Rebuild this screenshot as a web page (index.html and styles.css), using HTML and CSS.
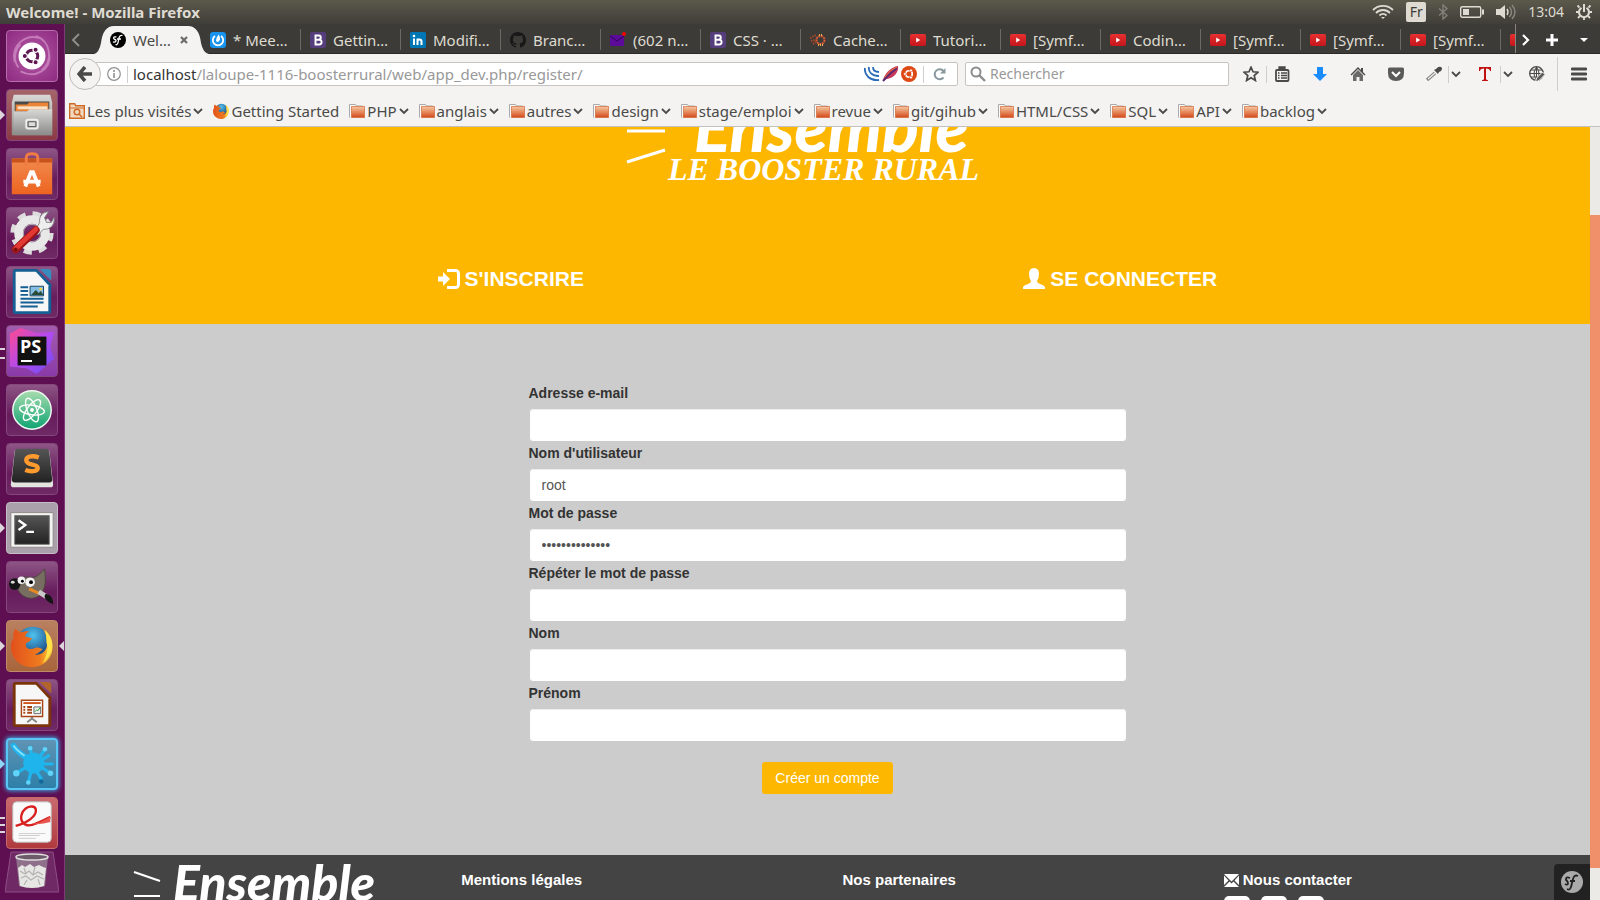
FILE: index.html
```html
<!DOCTYPE html>
<html lang="fr">
<head>
<meta charset="utf-8">
<title>Welcome! - Mozilla Firefox</title>
<link rel="stylesheet" href="styles.css">
</head>
<body>
<svg class="defs" aria-hidden="true">
  <defs>
    <linearGradient id="g-folder" x1="0" y1="0" x2="0" y2="1"><stop offset="0" stop-color="#f6c9a0"/><stop offset="1" stop-color="#d4491a"/></linearGradient>
    <linearGradient id="g-red" x1="0" y1="0" x2="0" y2="1"><stop offset="0" stop-color="#e8302f"/><stop offset="1" stop-color="#c4161c"/></linearGradient>
    <linearGradient id="g-steel" x1="0" y1="0" x2="0" y2="1"><stop offset="0" stop-color="#d8d8d6"/><stop offset="1" stop-color="#8a8a88"/></linearGradient>
    <linearGradient id="g-dark" x1="0" y1="0" x2="0" y2="1"><stop offset="0" stop-color="#555"/><stop offset="1" stop-color="#222"/></linearGradient>
    <linearGradient id="g-bag" x1="0" y1="0" x2="0" y2="1"><stop offset="0" stop-color="#f08a4e"/><stop offset="1" stop-color="#ee6420"/></linearGradient>
    <linearGradient id="g-atom" x1="0" y1="0" x2="0" y2="1"><stop offset="0" stop-color="#a8dcae"/><stop offset="1" stop-color="#0ea472"/></linearGradient>
    <linearGradient id="g-ps" x1="0" y1="0" x2="1" y2="1"><stop offset="0" stop-color="#ff4a8d"/><stop offset=".5" stop-color="#b44af0"/><stop offset="1" stop-color="#6a4cf0"/></linearGradient>
    <radialGradient id="g-globe" cx=".5" cy=".25" r=".7"><stop offset="0" stop-color="#4fc3ee"/><stop offset="1" stop-color="#12316f"/></radialGradient>
    <linearGradient id="g-fox" x1="0" y1="0" x2="1" y2="0"><stop offset="0" stop-color="#e2501c"/><stop offset=".7" stop-color="#ef7b1e"/><stop offset="1" stop-color="#ffd83a"/></linearGradient>
  </defs>
  <symbol id="i-folder" viewBox="0 0 16 16"><path d="M.5 14.500V1.500h6l1 1.500h6v3" fill="#fafafa" stroke="#aaa"/><rect x="2.500" y="3.500" width="13" height="11" fill="url(#g-folder)" stroke="#cf5a28" stroke-opacity=".6"/></symbol>
  <symbol id="i-down" viewBox="0 0 10 8"><path d="M1 2l4 4 4-4" fill="none" stroke="#4a4a48" stroke-width="1.800"/></symbol>
  <symbol id="i-yt" viewBox="0 0 16 16"><rect y="2" width="16" height="12" rx="2" fill="url(#g-red)"/><path d="M6.200 5.500v5l4-2.500z" fill="#fff"/></symbol>
  <symbol id="i-bs" viewBox="0 0 16 16"><rect width="16" height="16" rx="2" fill="#563d7c"/><path d="M5.500 3.500h3.200a2 2 0 0 1 0 4.200H5.500zm0 4.200h3.700a2.400 2.400 0 0 1 0 4.800H5.500z" fill="none" stroke="#fff" stroke-width="1.900"/></symbol>
  <symbol id="i-fox" viewBox="0 0 44 44"><circle cx="23" cy="20" r="18" fill="url(#g-globe)"/><path d="M3 14c-1-4 0-8 2-10 1 2 3 3 5 4 3-1 6-2 9-1-2 1-4 3-4 5 2 1 5 1 7 2-1 3-4 4-6 5-2 5 4 8 9 5 3-1 6 0 8 2-3 1-4 4-8 5 10 1 15-8 12-17 0-4-2-7-4-9 5 3 9 9 10 15C45 34 34 44 22 44 9 44 0 34 0 23c0-4 1-7 3-9z" fill="url(#g-fox)"/><path d="M35 5c5 4 9 10 8 18-1 7-5 13-10 17 5-8 6-16 4-22 0-5 0-9-2-13z" fill="#ffe14a"/></symbol>
  <symbol id="i-ubuntu" viewBox="0 0 20 20"><circle cx="10" cy="10" r="5.800" fill="none" stroke="currentColor" stroke-width="3"/><g fill="currentColor" stroke="var(--ring)" stroke-width="1.200"><circle cx="2.800" cy="10" r="2.600"/><circle cx="13.600" cy="3.700" r="2.600"/><circle cx="13.600" cy="16.300" r="2.600"/></g></symbol>
</svg>

<header class="panel">
  <h1 class="panel-title">Welcome! - Mozilla Firefox</h1>
  <div class="tray">
    <svg width="22" height="16" viewBox="0 0 22 16" fill="none" stroke="#dfdbd2" stroke-width="1.800"><path d="M1 6c5.500-5.500 14.500-5.500 20 0M4 9c4-4 10-4 14 0M7.500 11.500c2-2 5-2 7 0"/><path d="M9 13l2 2 2-2z" fill="#dfdbd2" stroke="none"/></svg>
    <span class="lang">Fr</span>
    <svg width="10" height="16" viewBox="0 0 10 16" fill="none" stroke="#85837c" stroke-width="1.300"><path d="M1 4.500l8 7-4 3.500V1l4 3.500-8 7"/></svg>
    <svg width="24" height="12" viewBox="0 0 24 12"><rect x=".7" y=".7" width="20" height="10.600" rx="1.500" fill="none" stroke="#dfdbd2" stroke-width="1.400"/><path d="M3 3h6v6H3zM22 3.500h2v5h-2z" fill="#dfdbd2"/></svg>
    <svg width="20" height="16" viewBox="0 0 20 16"><path d="M0 5h4l5-4v14l-5-4H0z" fill="#dfdbd2"/><path d="M11 5q2 3 0 6" fill="none" stroke="#dfdbd2" stroke-width="1.400"/><path d="M13.500 3q4 5 0 10M16 1q6 7 0 14" fill="none" stroke="#8a877f" stroke-width="1.400"/></svg>
    <time>13:04</time>
    <svg width="16" height="16" viewBox="0 0 16 16" fill="none" stroke="#dfdbd2"><path d="M5.500 3.800a5 5 0 1 0 5 0" stroke-width="2"/><path d="M8 0v8" stroke-width="2"/><path d="M3.500 3.500l-2-2M12.500 3.500l2-2M3 8H0M13 8h3M4 12l-2 2M12 12l2 2M8 13v3" stroke-width="1.800"/></svg>
  </div>
</header>

<div class="desktop">
<nav class="launcher" aria-label="Lanceur">
  <button class="tile t-dash" aria-label="Dash"><svg viewBox="0 0 52 52"><g fill="none" stroke="#e3a9d8" stroke-width="2" opacity=".55"><path d="M8 32C4 14 20 2 36 8M30 5c16 6 18 26 6 36M44 24c2 16-14 26-30 18M12 38C6 30 8 20 14 14"/></g><circle cx="26" cy="26" r="14" fill="#fff"/></svg><svg class="ubuntu" viewBox="0 0 20 20"><use href="#i-ubuntu"/></svg></button>
  <button class="tile t-files run" aria-label="Fichiers"><svg viewBox="0 0 52 52"><path d="M7 5h38l2 8v34H5V13z" fill="url(#g-steel)"/><path d="M8 12h36v11H8z" fill="#4a4a48"/><path d="M9 15h12l2-2h20v9H9z" fill="#eb8436"/><path d="M11 17h31v3H11z" fill="#f9e2c5"/><path d="M7 22h14l2-2h24v27H7z" fill="url(#g-steel)"/><rect x="20" y="31" width="12" height="9" rx="2" fill="none" stroke="#eee" stroke-width="2"/><path d="M22 33h8v5h-8z" fill="#ddd" stroke="#555"/></svg></button>
  <button class="tile" aria-label="Logithèque"><svg viewBox="0 0 52 52"><path d="M5 10h42v37H5z" fill="url(#g-bag)"/><path d="M5 10h42v4H5z" fill="#c9531c"/><path d="M20 17V9q0-4 6-4t6 4v8" fill="none" stroke="#f07b45" stroke-width="3"/><path d="M19 39l6-15h2l6 15M17 34h18" fill="none" stroke="#fff" stroke-width="4"/></svg></button>
  <button class="tile" aria-label="Paramètres"><svg viewBox="0 0 52 52"><circle cx="26" cy="26" r="19" fill="none" stroke="#dcdcdc" stroke-width="7" stroke-dasharray="8 6.920"/><circle cx="26" cy="26" r="14" fill="none" stroke="#e8e8e8" stroke-width="9"/><circle cx="26" cy="26" r="9" fill="none" stroke="#b5b5b5" stroke-width="1"/><path d="M30 22l4-7c-1-6 3-11 9-11l-4 6 2 5 5 0 3-5c1 8-5 13-11 12l-6 6z" fill="#eee" stroke="#888"/><path d="M9 43l21-20" stroke="#9e1616" stroke-width="8" stroke-linecap="round"/><path d="M9 42l21-20" stroke="#e23a33" stroke-width="5" stroke-linecap="round"/><circle cx="9" cy="43" r="2" fill="#7c0d0d"/></svg></button>
  <button class="tile" aria-label="LibreOffice Writer"><svg viewBox="0 0 52 52"><path d="M9 2h22l15 16v28q0 3-3 3H9q-3 0-3-3V5q0-3 3-3z" fill="#145f94"/><path d="M34 2h9q3 0 3 3v9z" fill="#3a8bbd"/><path d="M9 5h21l13 14v27H9z" fill="#f7f7f7"/><path d="M14 21h8M14 25h8M14 29h8M14 33h24M14 37h24M14 41h18" stroke="#145f94" stroke-width="2"/><path d="M24 20h14v10H24z" fill="#85bde3" stroke="#14405f"/><path d="M25 29l5-5 3 3 2-2 3 4z" fill="#2b4a38"/><circle cx="35" cy="23" r="1.500" fill="#ffd042"/></svg></button>
  <button class="tile t-ps run2" aria-label="PhpStorm"><svg viewBox="0 0 52 52"><path d="M3 8L14 2l16 5 19-1-4 16 4 12-18 16-11-6-17-2z" fill="url(#g-ps)"/><path d="M11 11h30v30H11z" fill="#111"/></svg><b class="ps">PS</b><i class="psbar"></i></button>
  <button class="tile" aria-label="Atom"><svg viewBox="0 0 52 52"><circle cx="26" cy="26" r="20" fill="url(#g-atom)" stroke="#f0faf4" stroke-width="1.500"/><g fill="none" stroke="#fff" stroke-width="1.400"><ellipse cx="26" cy="26" rx="13" ry="5" transform="rotate(8 26 26)"/><ellipse cx="26" cy="26" rx="13" ry="5" transform="rotate(68 26 26)"/><ellipse cx="26" cy="26" rx="13" ry="5" transform="rotate(128 26 26)"/></g><circle cx="26" cy="26" r="2" fill="#fff"/></svg></button>
  <button class="tile" aria-label="Sublime Text"><svg viewBox="0 0 52 52"><path d="M8 7h36l4 35q0 3-3 3H7q-3 0-3-3z" fill="#e3e3e0"/><path d="M11 5h30q2 0 3 3l3 29q0 3-3 3H8q-3 0-3-3L8 8q1-3 3-3z" fill="url(#g-dark)"/><path d="M33 14c-5-2-13-2-13 3 0 6 12 3 12 8 0 4-8 4-13 2" fill="none" stroke="#ff9a2e" stroke-width="4.500"/></svg></button>
  <button class="tile t-term run" aria-label="Terminal"><svg viewBox="0 0 52 52"><path d="M4 10h44v36H4z" fill="#f3f3f1" stroke="#8c8886"/><path d="M8 13h36v30H8z" fill="url(#g-dark)" stroke="#777"/><path d="M12 18l7 5-7 5M20 30h8" fill="none" stroke="#fff" stroke-width="2.500"/></svg></button>
  <button class="tile" aria-label="GIMP"><svg viewBox="0 0 52 52"><path d="M8 22c5-6 10-7 16-6 6 1 10-3 15-9 2 14 1 24-7 29-7 4-16 1-20-6z" fill="#776d60" stroke="#4c463e"/><ellipse cx="8" cy="23" rx="6" ry="6" fill="#151515"/><ellipse cx="6" cy="21" rx="2" ry="1.500" fill="#ddd"/><circle cx="15" cy="19" r="4" fill="#f4f4f4"/><circle cx="24" cy="21" r="5" fill="#f4f4f4"/><circle cx="16" cy="20" r="1.500"/><circle cx="25" cy="21" r="2"/><path d="M23 28l18 8" stroke="#e58a22" stroke-width="3"/><path d="M33 31l8 5" stroke="#c9c9c9" stroke-width="5"/><path d="M40 33c6 1 8 5 8 11-5-2-8-4-9-8z" fill="#151515"/></svg></button>
  <button class="tile t-fox run focus" aria-label="Firefox"><svg viewBox="-4 -4 52 52"><use href="#i-fox" width="44" height="44"/></svg></button>
  <button class="tile" aria-label="LibreOffice Impress"><svg viewBox="0 0 52 52"><path d="M9 2h22l15 16v28q0 3-3 3H9q-3 0-3-3V5q0-3 3-3z" fill="#7a3408"/><path d="M34 2h9q3 0 3 3v9z" fill="#b1642c"/><path d="M9 5h21l13 14v27H9z" fill="#f7f7f7"/><path d="M26 38v2l-5 4M26 40l5 4" stroke="#888" stroke-width="2" fill="none"/><path d="M15 21h22v17H15z" fill="#fff" stroke="#a84514" stroke-width="1.500"/><path d="M17 24h18" stroke="#d2571e" stroke-width="2"/><path d="M21 28h5M21 31h5M21 34h5M17 28h2M17 31h2M17 34h2" stroke="#a84514" stroke-width="2"/><path d="M28 28h7v7h-7z" fill="#eee" stroke="#666"/><path d="M29 33l2-2 1 1 3-4" stroke="#1e9b2e" fill="none"/></svg></button>
  <button class="tile t-splash run" aria-label="Bureau"><svg viewBox="0 0 52 52"><g fill="#1fb5ec" stroke="#1fb5ec" stroke-linecap="round"><circle cx="28" cy="25" r="11"/><path d="M6 6q4 8 16 14" stroke-width="6"/><path d="M24 8l2 10M40 10l-6 9M44 17l-8 5M48 26H38M46 36l-9-6M36 42l-5-8M22 46l3-12M9 36l10-6" stroke-width="3.500"/></g><g fill="#5fd3f8"><circle cx="24" cy="9" r="2.500"/><circle cx="46" cy="36" r="3"/><circle cx="9" cy="36" r="3.500"/><circle cx="22" cy="46" r="2.500"/><circle cx="40" cy="10" r="2.500"/></g><circle cx="36" cy="45" r="2.500" fill="#126a9b"/><path d="M6 6q4 6 12 11" stroke="#8ae2fb" stroke-width="2" fill="none"/></svg></button>
  <button class="tile t-pdf run3" aria-label="Visionneur de documents"><svg viewBox="0 0 52 52"><rect x="6" y="4" width="40" height="42" rx="4" fill="#fafafa" stroke="#bbb"/><path d="M9 29c12-3 22-10 21-17-1-5-10-4-14 3-4 9 2 15 10 13 6-2 14-6 19-8" fill="none" stroke="#d8201f" stroke-width="2.500"/><path d="M26 27q10-1 19-8v6q-9 3-19 2z" fill="#e8554f"/><path d="M12 37h28M12 39h22M12 42h18" stroke="#ccc"/></svg></button>
  <button class="trash" aria-label="Corbeille"><svg viewBox="0 0 54 42"><path d="M6 1h42l6 40H0z" fill="#6f2a65" stroke="#8e4f86"/><path d="M11 6l3 29q13 4 26 0l3-29z" fill="#9a8898" opacity=".75"/><path d="M13 17l4-3 3 2 5-3 4 3 5-2 4 2 3 1-2 18q-12 4-24 0z" fill="#e6e6e4"/><path d="M15 20l5 3 4-3 4 4 5-3 5 3M16 27l5-2 5 4 6-4 7 3M19 17l2 6M30 16l-2 8M22 29l-3 5M33 28l2 6" fill="none" stroke="#b5b2b1" stroke-width="1.200"/><ellipse cx="27" cy="6" rx="16" ry="3" fill="#6d5a6a" stroke="#ddd" stroke-width="1.500"/></svg></button>
</nav>

<div class="window">
  <div class="tabs">
    <button class="tab-prev" aria-label="Onglets précédents"><svg width="10" height="14" viewBox="0 0 10 14"><path d="M8 1L2 7l6 6" fill="none" stroke="#8f8d87" stroke-width="2"/></svg></button>
    <div class="tablist">
      <button class="tab active"><svg class="fav" viewBox="0 0 16 16"><circle cx="8" cy="8" r="8" fill="#000"/><path d="M12.500 3.500c-3-1-3.500 2-4 5s-1.500 5-3 4M7 7h4M6.500 5C3 4 3 7 5 7.500S6 11 3 9.800" stroke="#fff" stroke-width="1.300" fill="none"/></svg><span>Wel…</span><svg class="close" viewBox="0 0 8 8"><path d="M1 1l6 6M7 1L1 7" stroke="#6d6b66" stroke-width="2.200"/></svg></button>
      <button class="tab"><svg class="fav" viewBox="0 0 16 16"><rect width="16" height="16" rx="3" fill="#1893ee"/><path d="M5 4a5.200 5.200 0 1 0 6 0" fill="none" stroke="#fff" stroke-width="1.800"/><path d="M8.500 2.500Q11 6 9.500 8.500T6 9q0-3 2.500-6.500z" fill="#fff"/></svg><span>* Mee…</span></button>
      <button class="tab"><svg class="fav"><use href="#i-bs"/></svg><span>Gettin…</span></button>
      <button class="tab"><svg class="fav" viewBox="0 0 16 16"><rect width="16" height="16" rx="1.500" fill="#0077b5"/><path d="M4 6.500V13M7.500 6.500V13M7.500 9.500q0-2 2-2t2 2V13" fill="none" stroke="#fff" stroke-width="2"/><circle cx="4" cy="4" r="1.300" fill="#fff"/></svg><span>Modifi…</span></button>
      <button class="tab"><svg class="fav" viewBox="0 0 16 16"><path fill="#191717" d="M8 0C3.580 0 0 3.580 0 8c0 3.540 2.290 6.530 5.470 7.590.4.070.55-.17.55-.38v-1.490c-2.230.49-2.700-.95-2.700-.95-.36-.92-.89-1.170-.89-1.170-.73-.5.050-.49.050-.49.81.06 1.230.83 1.230.83.72 1.230 1.880.87 2.340.67.070-.52.28-.87.5-1.070-1.780-.2-3.640-.89-3.640-3.950 0-.87.31-1.590.82-2.150-.08-.2-.36-1.020.08-2.120 0 0 .67-.21 2.200.82a7.600 7.600 0 0 1 4 0c1.530-1.040 2.200-.82 2.200-.82.44 1.100.16 1.920.08 2.120.51.56.82 1.270.82 2.150 0 3.070-1.870 3.750-3.650 3.950.29.25.54.73.54 1.480v2.190c0 .21.150.46.55.38A8 8 0 0 0 16 8c0-4.420-3.580-8-8-8z"/></svg><span>Branc…</span></button>
      <button class="tab"><svg class="fav" viewBox="0 0 16 16"><path d="M0 3h14v11H0z" fill="#5b0a9a"/><path d="M0 4l7 5 7-5" fill="none" stroke="#2d0454"/><circle cx="14" cy="2" r="2" fill="red"/></svg><span>(602 n…</span></button>
      <button class="tab"><svg class="fav"><use href="#i-bs"/></svg><span>CSS · …</span></button>
      <button class="tab"><svg class="fav" viewBox="0 0 16 16" fill="none" stroke-width="2"><path d="M0 6l6-3M1 9l5-1M3 12l3-2" stroke="#a3482c" stroke-dasharray="1.500 1"/><circle cx="10.500" cy="8" r="4" stroke="#dd5b35" stroke-dasharray="2 .7"/><path d="M8 13l6 0M9 3l4 0" stroke="#e8b052" stroke-dasharray="1 1"/></svg><span>Cache…</span></button>
      <button class="tab"><svg class="fav"><use href="#i-yt"/></svg><span>Tutori…</span></button>
      <button class="tab"><svg class="fav"><use href="#i-yt"/></svg><span>[Symf…</span></button>
      <button class="tab"><svg class="fav"><use href="#i-yt"/></svg><span>Codin…</span></button>
      <button class="tab"><svg class="fav"><use href="#i-yt"/></svg><span>[Symf…</span></button>
      <button class="tab"><svg class="fav"><use href="#i-yt"/></svg><span>[Symf…</span></button>
      <button class="tab"><svg class="fav"><use href="#i-yt"/></svg><span>[Symf…</span></button>
      <button class="tab cut" aria-label="Onglet suivant"><svg class="fav"><use href="#i-yt"/></svg></button>
    </div>
    <div class="tab-tools">
      <button aria-label="Onglets suivants"><svg width="8" height="12" viewBox="0 0 8 12"><path d="M1 1l5 5-5 5" fill="none" stroke="#fff" stroke-width="2.200"/></svg></button>
      <button aria-label="Nouvel onglet"><svg width="14" height="14" viewBox="0 0 14 14"><path d="M7 1v12M1 7h12" stroke="#fff" stroke-width="3"/></svg></button>
      <button aria-label="Liste des onglets"><svg width="8" height="4" viewBox="0 0 8 4"><path d="M0 0h8L4 4z" fill="#fff"/></svg></button>
    </div>
  </div>

  <div class="toolbar">
    <button class="back" aria-label="Précédent"><svg width="16" height="16" viewBox="0 0 16 16"><path d="M8 1L2 8l6 7M2 8h13" fill="none" stroke="#4a4a48" stroke-width="3.500"/></svg></button>
    <div class="urlbar">
      <svg width="14" height="14" viewBox="0 0 14 14"><circle cx="7" cy="7" r="6.300" fill="none" stroke="#8f8f8f" stroke-width="1.200"/><path d="M7 6v5M7 3v2" stroke="#8f8f8f" stroke-width="1.600"/></svg>
      <i class="sep"></i>
      <a class="url" href="#"><span>localhost</span>/laloupe-1116-boosterrural/web/app_dev.php/register/</a>
      <span class="badges">
        <svg width="16" height="16" viewBox="0 0 16 16" fill="none" stroke="#2b6cb8" stroke-width="1.800"><path d="M1 2c-1 7 5 13 14 12M5 1c-1 5 3 9 10 9M9 1c0 3 2 5 6 5"/></svg>
        <svg width="17" height="16" viewBox="0 0 17 16"><path d="M1 14C3 7 9 1 16 0c1 5-3 12-11 13z" fill="#c8385a"/><path d="M1 15C6 9 11 5 15 2" stroke="#5c2b6d" stroke-width="2" fill="none"/><path d="M3 11q5-8 12-10" stroke="#e8743a" fill="none"/></svg>
        <svg class="ubuntu-badge" width="16" height="16" viewBox="0 0 20 20"><circle cx="10" cy="10" r="10" fill="#dd4814"/><use href="#i-ubuntu" x="3" y="3" width="14" height="14"/></svg>
      </span>
      <i class="sep"></i>
      <button class="reload" aria-label="Actualiser"><svg width="14" height="14" viewBox="0 0 14 14"><path d="M10.500 10.500A5 5 0 1 1 10.500 4" fill="none" stroke="#8a98a0" stroke-width="2"/><path d="M12.500 1v5.500H7z" fill="#8a98a0"/></svg></button>
    </div>
    <label class="search"><svg width="16" height="16" viewBox="0 0 16 16"><circle cx="6" cy="6" r="4.500" fill="none" stroke="#8c8c8c" stroke-width="2"/><path d="M9.500 9.500L15 15" stroke="#8c8c8c" stroke-width="2.400"/></svg><input type="search" placeholder="Rechercher" aria-label="Rechercher"></label>
    <div class="tools">
      <button aria-label="Marquer cette page"><svg viewBox="0 0 16 16"><path d="M8 1.200l2 4.600 5 .4-3.800 3.300 1.200 5L8 11.800l-4.400 2.700 1.200-5L1 6.200l5-.4z" fill="none" stroke="#4a4a48" stroke-width="1.700"/></svg></button>
      <i class="sep"></i>
      <button class="clip" aria-label="Marque-pages"><svg viewBox="0 0 16 16"><rect x="2" y="4" width="12.500" height="11" rx="1" fill="none" stroke="#4a4a48" stroke-width="1.800"/><path d="M5 1h6v3H5zM4 7h1.500M7 7h6M4 9.500h1.500M7 9.500h6M4 12h1.500M7 12h6" stroke="#4a4a48" stroke-width="1.300" fill="#4a4a48"/></svg></button>
      <button class="w38" aria-label="Téléchargements"><svg viewBox="0 0 16 16"><path d="M5 1h6v7h4l-7 7-7-7h4z" fill="#1a8cff"/></svg></button>
      <button class="w38" aria-label="Accueil"><svg viewBox="0 0 16 16"><path d="M8 1L.5 8.500l1 1L8 3l6.500 6.500 1-1L13 6V2h-2v2z" fill="#4a4a48"/><path d="M3 9l5-5 5 5v6H9.500v-4h-3v4H3z" fill="#6a6a68"/></svg></button>
      <button class="w38" aria-label="Pocket"><svg viewBox="0 0 16 16"><path d="M1.500 1.500h13q1.500 0 1.500 1.500v4q0 8-8 8T0 7V3q0-1.500 1.500-1.500z" fill="#5a5a58"/><path d="M4 6l4 4 4-4" fill="none" stroke="#fff" stroke-width="2"/></svg></button>
      <button class="w38" aria-label="Pipette"><svg viewBox="0 0 16 16"><path d="M1 14l8-7" stroke="#888" stroke-width="3.500"/><path d="M2 13l7-6" stroke="#eee" stroke-width="1.200"/><path d="M8 4l4 4 1-2 2-1q2-3 0-4t-4 1l-1 1z" fill="#4a4a48"/></svg></button>
      <i class="sep"></i><svg class="drop"><use href="#i-down"/></svg>
      <button class="w38" aria-label="Texte"><svg viewBox="0 0 16 16"><path d="M2 1h12v4h-1q0-2.500-4-2.500v10.500q0 1 2 1.200v.8H5v-.8q2-.2 2-1.200V2.500Q3 2.500 3 5H2z" fill="#c01010"/></svg></button>
      <i class="sep"></i><svg class="drop"><use href="#i-down"/></svg>
      <button class="w38" aria-label="Langue"><svg viewBox="0 0 16 16"><circle cx="7.500" cy="7.500" r="6.800" fill="none" stroke="#4a4a48" stroke-width="1.300"/><path d="M7.500 1v13M1 7.500h13M2 4h11M2 11h8M7.500 1q-5 6.500 0 13M7.500 1q5 6.500 0 13" fill="none" stroke="#4a4a48"/><path d="M6.500 16l1-4 6-6 2.500 2.500-6 6z" fill="#5a5a58" stroke="#f4f3f1"/></svg></button>
      <i class="sep tall"></i>
      <button aria-label="Menu"><svg viewBox="0 0 16 16"><path d="M1 3h14M1 8h14M1 13h14" stroke="#4a4a48" stroke-width="2.800" stroke-linecap="round"/></svg></button>
    </div>
  </div>

  <nav class="bookmarks" aria-label="Marque-pages">
    <a href="#"><svg class="bi" viewBox="0 0 16 16"><path d="M.7 15.300V.7h5l1 2h8.600v12.600z" fill="#f3d9c0" stroke="#cc6a26" stroke-width="1.400"/><path d="M1 5h14" stroke="#cc6a26"/><circle cx="8" cy="9" r="2.800" fill="none" stroke="#cc6a26" stroke-width="1.500"/><path d="M10 11l3 3" stroke="#cc6a26" stroke-width="1.500"/></svg>Les plus visités<svg class="chev"><use href="#i-down"/></svg></a>
    <a href="#"><svg class="bi"><use href="#i-fox"/></svg>Getting Started</a>
    <a href="#"><svg class="bi"><use href="#i-folder"/></svg>PHP<svg class="chev"><use href="#i-down"/></svg></a>
    <a href="#"><svg class="bi"><use href="#i-folder"/></svg>anglais<svg class="chev"><use href="#i-down"/></svg></a>
    <a href="#"><svg class="bi"><use href="#i-folder"/></svg>autres<svg class="chev"><use href="#i-down"/></svg></a>
    <a href="#"><svg class="bi"><use href="#i-folder"/></svg>design<svg class="chev"><use href="#i-down"/></svg></a>
    <a href="#"><svg class="bi"><use href="#i-folder"/></svg>stage/emploi<svg class="chev"><use href="#i-down"/></svg></a>
    <a href="#"><svg class="bi"><use href="#i-folder"/></svg>revue<svg class="chev"><use href="#i-down"/></svg></a>
    <a href="#"><svg class="bi"><use href="#i-folder"/></svg>git/gihub<svg class="chev"><use href="#i-down"/></svg></a>
    <a href="#"><svg class="bi"><use href="#i-folder"/></svg>HTML/CSS<svg class="chev"><use href="#i-down"/></svg></a>
    <a href="#"><svg class="bi"><use href="#i-folder"/></svg>SQL<svg class="chev"><use href="#i-down"/></svg></a>
    <a href="#"><svg class="bi"><use href="#i-folder"/></svg>API<svg class="chev"><use href="#i-down"/></svg></a>
    <a href="#"><svg class="bi"><use href="#i-folder"/></svg>backlog<svg class="chev"><use href="#i-down"/></svg></a>
  </nav>

  <div class="viewport">
    <div class="page">
      <header class="hero">
        <div class="logo">
          <svg class="rays" width="40" height="80" viewBox="0 0 40 80" fill="none" stroke="#fff" stroke-width="3"><path d="M1 5l38 12M1 46h38M1 77l38-12"/></svg>
          <div class="logo-words"><span class="brand">Ensemble</span><span class="tagline">LE BOOSTER RURAL</span></div>
        </div>
        <nav class="account">
          <a href="#"><svg width="22" height="20" viewBox="0 0 22 20"><path d="M0 7.500h5V3l7 7-7 7v-4.500H0z" fill="#fff"/><path d="M9 1.500h8.500a3 3 0 0 1 3 3v11a3 3 0 0 1-3 3H9" fill="none" stroke="#fff" stroke-width="3"/></svg>S'INSCRIRE</a>
          <a href="#"><svg width="22" height="22" viewBox="0 0 22 22"><path d="M11 0q5 0 5 6 0 4-2 7 0 2 3 3 4 1 5 3v2H0v-2q1-2 5-3 3-1 3-3-2-3-2-7 0-6 5-6z" fill="#fff"/></svg>SE CONNECTER</a>
        </nav>
      </header>

      <main class="content">
        <form class="register">
          <div class="field"><label for="email">Adresse e-mail</label><input id="email" type="email"></div>
          <div class="field"><label for="user">Nom d'utilisateur</label><input id="user" type="text" value="root"></div>
          <div class="field"><label for="pw1">Mot de passe</label><input id="pw1" type="password" value="abcdefghijklmn"></div>
          <div class="field"><label for="pw2">Répéter le mot de passe</label><input id="pw2" type="password"></div>
          <div class="field"><label for="nom">Nom</label><input id="nom" type="text"></div>
          <div class="field"><label for="prenom">Prénom</label><input id="prenom" type="text"></div>
          <button class="submit" type="submit">Créer un compte</button>
        </form>
      </main>

      <footer class="footer">
        <div class="foot-logo"><svg width="28" height="50" viewBox="0 0 28 50" fill="none" stroke="#fff" stroke-width="2.200"><path d="M1 2l26 9M1 26h26M1 49l26-9"/></svg><span>Ensemble</span></div>
        <div><a href="#">Mentions légales</a></div>
        <div><a href="#">Nos partenaires</a></div>
        <div>
          <a href="#"><svg width="15" height="13" viewBox="0 0 15 13"><path d="M0 0h15L7.500 7.500zM0 1.500L4.500 6.500 0 11zM15 1.500L10.500 6.500 15 11zM5.500 7.500l2 2 2-2L15 13H0z" fill="#fff"/></svg>Nous contacter</a>
          <div class="social"><i></i><i></i><i></i></div>
        </div>
      </footer>
    </div>
    <div class="scrollbar"><div class="thumb"></div></div>
    <button class="sf" aria-label="Symfony"><svg width="24" height="24" viewBox="0 0 24 24"><circle cx="12" cy="12" r="11" fill="#aaa"/><path d="M18 6c-4-2-5 2-6 7s-2 8-5 6M10 11h5M10 8c-4-2-5 1-3 3s1 5-2 3" fill="none" stroke="#222" stroke-width="1.800"/></svg></button>
  </div>
</div>
</div>
</body>
</html>
```

FILE: styles.css
```css
* { box-sizing: border-box; }
body {
  margin: 0;
  height: 100vh;
  display: flex;
  flex-direction: column;
  overflow: hidden;
  font: 15px/20px "Noto Sans", "Open Sans", sans-serif;
  color: #4a4a48;
}
button { padding: 0; border: 0; background: none; font: inherit; color: inherit; }
a { color: inherit; text-decoration: none; }
svg { display: block; flex: none; }
.defs { position: absolute; width: 0; height: 0; }

/* Top panel */
.panel {
  display: flex;
  align-items: center;
  justify-content: space-between;
  height: 24px;
  padding: 0 8px 0 6px;
  background: linear-gradient(#5c594c, #3f3e39);
  color: #dfdbd2;
}
.panel-title { margin: 0; font-size: 15px; line-height: 20px; font-weight: 700; }
.tray { display: flex; align-items: center; gap: 12px; font-size: 14px; }
.lang { width: 20px; height: 20px; border-radius: 2px; background: #dfdbd2; color: #3c3b37; text-align: center; }

.desktop { flex: 1; min-height: 0; display: flex; }

/* Launcher */
.launcher {
  flex: none;
  width: 65px;
  padding: 6px 0 0 6px;
  display: flex;
  flex-direction: column;
  gap: 7px;
  overflow: hidden;
  background: #5d0f51;
  border-right: 1px solid #7d3a74;
}
.tile {
  position: relative;
  flex: none;
  width: 52px;
  height: 52px;
  border-radius: 4px;
  border: 1px solid #85487d;
  background: linear-gradient(#8d5585, #671c5c 60%, #6f2a65);
}
.tile svg { width: 50px; height: 50px; }
.t-dash { background: radial-gradient(#b45aa6, #8d2a80); border-color: #b36fa9; }
.tile .ubuntu { position: absolute; left: 15px; top: 15px; width: 20px; height: 20px; color: #5d1650; --ring: #fff; }
.t-files { background: linear-gradient(#a5656a, #8c3a44); }
.t-ps { background: linear-gradient(#a45cb0, #8b3aa8); }
.ps { position: absolute; left: 13px; top: 10px; font: 700 18px/20px "Open Sans", sans-serif; color: #fff; }
.psbar { position: absolute; left: 14px; top: 34px; width: 11px; height: 2px; background: #fff; }
.t-term { background: #aaa0ac; border-color: #c5bcc6; }
.t-fox { background: linear-gradient(#b98060, #a8653c); border-color: #bd8a6a; }
.t-splash { background: linear-gradient(#5f93b4, #2e7fa8); border: 2px solid #5ac6f5; box-shadow: 0 0 4px 1px #3fa4dc; }
.t-splash svg { width: 48px; height: 48px; }
.t-pdf { background: linear-gradient(#c96a6e, #b03a3e); border-color: #c46a6c; }
.run::before, .focus::after {
  content: "";
  position: absolute;
  left: -7px;
  top: 20px;
  border: 5px solid transparent;
  border-left-color: #dcd6dc;
  border-right-width: 0;
}
.t-splash::before { left: -8px; top: 19px; border-left-color: #8ed4f5; }
.focus::after { left: auto; right: -7px; border-left-width: 0; border-right: 5px solid #dcd6dc; }
.run2::before, .run3::before { content: ""; position: absolute; left: -7px; top: 22px; width: 5px; height: 7px; border: solid #dcd6dc; border-width: 2px 0; }
.run3::before { top: 19px; height: 12px; background: linear-gradient(#dcd6dc, #dcd6dc) center / 5px 2px no-repeat; }
.trash { flex: none; width: 54px; height: 42px; margin: -5px 0 0 -1px; }
.trash svg { width: 54px; height: 42px; }

/* Browser window */
.window { flex: 1; min-width: 0; display: flex; flex-direction: column; background: #f4f3f1; }
.tabs { display: flex; height: 30px; background: #3c3b37; color: #dfdbd2; border-bottom: 1px solid #2b2a27; flex: none; }
.tab-prev { width: 35px; padding: 2px 0 0 6px; }
.tablist { flex: 1; min-width: 0; display: flex; clip-path: inset(0 0 -1px -20px); }
.tab {
  position: relative;
  flex: 0 0 100px;
  display: flex;
  align-items: center;
  gap: 7px;
  padding: 2px 0 0 10px;
  white-space: nowrap;
}
.tab:not(.active):not(:nth-child(2))::before { content: ""; position: absolute; left: 0; top: 5px; bottom: 3px; width: 1px; background: #6b6963; }
.fav { width: 16px; height: 16px; }
.active { color: #4a4a48; }
.active::before {
  content: "";
  position: absolute;
  z-index: 0;
  left: -6px;
  right: -9px;
  top: 2px;
  bottom: -1px;
  background: #f4f3f1;
  clip-path: path("M0 28Q5 27 7 17Q9 0 20 0H94Q105 0 107 17Q109 27 115 28Z");
}
.active > * { position: relative; }
.close { width: 8px; height: 8px; margin-left: 2px; }
.cut { flex: 0 1 15px; overflow: hidden; }
.tab-tools { display: flex; width: 85px; padding-top: 2px; border-left: 1px solid #85837c; }
.tab-tools button { flex: 1; display: grid; place-items: center; }
.tab-tools button:first-child { flex: 0 0 20px; }

.toolbar { flex: none; display: flex; align-items: center; height: 40px; padding: 0 4px; }
.back { position: relative; z-index: 1; flex: none; display: grid; place-items: center; width: 32px; height: 32px; border: 1px solid #bdbbb8; border-radius: 50%; background: #f4f3f1; }
.urlbar { flex: 1; min-width: 0; display: flex; align-items: center; height: 24px; margin-left: -6px; padding-left: 11px; background: #fff; border: 1px solid #c6c4c1; border-radius: 2px; }
.sep { flex: none; width: 1px; height: 17px; background: #d0cecb; margin: 0 5px 0 6px; }
.url { flex: 1; min-width: 0; white-space: nowrap; color: #999; overflow: hidden; }
.url span { color: #333; }
.badges { display: flex; gap: 2px; --ring: #dd4814; }
.ubuntu-badge { color: #fff; }
.reload { width: 28px; }
.urlbar .reload svg { margin-left: 4px; }
.search { flex: 0 0 264px; display: flex; align-items: center; gap: 4px; height: 24px; margin-left: 7px; padding-left: 4px; background: #fff; border: 1px solid #c6c4c1; border-radius: 2px; }
.search input { flex: 1; min-width: 0; padding: 0; border: 0; outline: 0; background: none; font: inherit; font-size: 14px; }
.search input::placeholder { color: #999; opacity: 1; }
.tools { flex: none; display: flex; align-items: center; margin-left: 14px; }
.tools button { display: grid; place-items: center; width: 16px; height: 24px; }
.tools button svg { width: 16px; height: 16px; }
.tools .sep { margin: 0 7px; }
.tools .clip { margin-right: 11px; }
.tools .w38 { width: 38px; }
.tools .w38 + .sep { margin: 0 2px 0 -5px; }
.tools .w38 + .tall { height: 34px; margin: 0 13px 0 0; }
.drop { width: 10px; height: 8px; }
.tools .drop + .w38 { width: 48px; margin-right: -4px; }
.tools > button:last-child { margin-right: 9px; }

.bookmarks { flex: none; display: flex; gap: 10px; height: 33px; padding: 1px 4px 0; border-bottom: 1px solid #c3c1be; white-space: nowrap; }
.bookmarks a { display: flex; align-items: center; gap: 2px; }
.bi { width: 16px; height: 16px; }
.chev { width: 10px; height: 8px; }

/* Web page */
.viewport { position: relative; flex: 1; min-height: 0; display: flex; font: 14px/20px "Liberation Sans", Arial, sans-serif; }
.page { flex: 1; min-width: 0; display: flex; flex-direction: column; overflow: hidden; background: #ccc; }
.scrollbar { flex: none; width: 10px; padding: 88px 0 32px; background: #eceae7; }
.thumb { height: 100%; background: #f0906a; }
.hero { flex: none; display: flex; flex-direction: column; justify-content: flex-end; height: 197px; background: #fdb700; color: #fff; }
.logo { display: flex; justify-content: center; padding-right: 50px; }
.rays { margin-top: -9px; }
.logo-words { display: flex; flex-direction: column; }
.brand { padding-left: 28px; font: italic 900 68px/64px Lato, sans-serif; }
.tagline { margin-top: -7px; padding-left: 2px; font: italic 700 32px/36px "Liberation Serif", serif; }
.account { display: grid; grid-template-columns: 1fr 1fr; padding: 80px 165px 33px 141px; }
.account a { display: flex; align-items: center; justify-content: center; gap: 5px; font-weight: 700; font-size: 21px; line-height: 24px; }

.content { flex: none; padding: 59px 15px 61px; }
.register { display: flex; flex-direction: column; gap: 1px; max-width: 598px; margin: 0 auto; }
.field { display: flex; flex-direction: column; gap: 5px; }
.field label { font-weight: 700; color: #333; }
.field input { height: 34px; padding: 6px 12px; border: 1px solid #ccc; border-radius: 4px; background: #fff; box-shadow: inset 0 1px 1px rgba(0, 0, 0, .075); font: 14px/20px "Liberation Sans", Arial, sans-serif; color: #555; outline: 0; }
.submit { align-self: center; margin-top: 19px; padding: 6px 13px; border-radius: 3px; background: #fdb700; color: #fff; }

.footer { flex: 1 0 auto; display: grid; grid-template-columns: repeat(4, 1fr); background: #444; color: #fff; font-weight: 700; font-size: 15px; }
.footer > div { padding: 15px 15px 0; }
.footer a { display: flex; align-items: center; gap: 4px; }
.footer .foot-logo { display: flex; gap: 12px; padding: 15px 0 0 68px; }
.foot-logo span { margin-top: -12px; font: italic 900 50px/48px Lato, sans-serif; }
.social { display: flex; gap: 11px; margin-top: 6px; }
.social i { width: 26px; height: 26px; border-radius: 5px; background: #fff; }
.sf { position: absolute; right: 10px; bottom: 0; display: grid; place-items: center; width: 36px; height: 36px; border-radius: 4px 0 0 0; background: #222; }
```
